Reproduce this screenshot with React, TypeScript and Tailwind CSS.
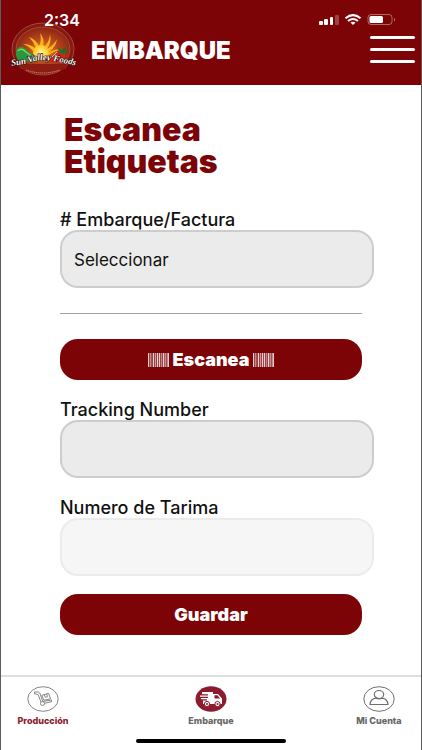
import React from "react";

function Logo() {
  return (
    <svg viewBox="0 0 68 56" className="h-14 w-[68px] shrink-0" role="img" aria-label="Sun Valley Foods">
      <defs>
        <radialGradient id="sky" cx="50%" cy="55%" r="55%">
          <stop offset="0" stopColor="#e08a25" />
          <stop offset="0.5" stopColor="#b8481b" />
          <stop offset="1" stopColor="#8d2414" />
        </radialGradient>
        <radialGradient id="sun">
          <stop offset="0" stopColor="#fff59a" />
          <stop offset="1" stopColor="#ffc51f" />
        </radialGradient>
        <path id="wave" d="M1 45 Q12 44 22 41 T44 40 Q56 42 68 45" />
      </defs>
      <ellipse cx="34" cy="28" rx="31" ry="26" fill="#87170f" stroke="#a86a58" strokeWidth="0.7" />
      <ellipse cx="34" cy="28" rx="27" ry="22" fill="url(#sky)" stroke="#c0704f" strokeWidth="0.5" />
      <g fill="#f9b41c">
        <path d="M30 26Q33 18 31 12Q36 18 34 26Z" />
        <path d="M35 26Q41 20 41 13Q43 21 38 28Z" />
        <path d="M38 28Q45 24 48 18Q47 26 40 31Z" />
        <path d="M27 27Q24 20 20 16Q28 19 31 27Z" />
        <path d="M24 30Q20 25 14 23Q22 23 27 28Z" />
        <path d="M40 31Q46 28 53 28Q46 30 40 34Z" />
      </g>
      <circle cx="32" cy="32" r="8" fill="url(#sun)" />
      <path d="M7 29Q11 23 17 28Q22 34 31 36L28 41L10 40Q6 36 7 29Z" fill="#2c963f" />
      <path d="M9 30Q12 26 17 31Q23 36 28 37" fill="none" stroke="#83d45b" strokeWidth="1.3" />
      <path d="M33 40Q41 38 46 33Q51 28 56 32Q56 39 50 42Z" fill="#c92a15" />
      <path d="M38 38Q45 36 48 31" fill="none" stroke="#ffd9a0" strokeWidth="0.9" />
      <path d="M50 31L49 27L53 29L57 25L56 29L59 31L54 33Z" fill="#1e6e2c" />
      <path d="M10 47Q34 58 58 47L54 43H12Z" fill="#8d1d12" />
      <path d="M17 49Q34 55 51 49" fill="none" stroke="#cf8b74" strokeWidth="1" strokeDasharray="1.4 0.6" />
      <text
        className="font-['Liberation_Serif',serif] text-[9px] font-bold italic"
        fill="#fff"
        stroke="#2b0705"
        strokeWidth="1.2"
        strokeLinejoin="round"
        paintOrder="stroke"
      >
        <textPath href="#wave" startOffset="50%" textAnchor="middle">Sun Valley Foods</textPath>
      </text>
    </svg>
  );
}

function StatusIcons() {
  return (
    <svg viewBox="0 0 78 14" className="h-3.5 w-[78px]" fill="#fff" aria-hidden="true">
      <rect x="0" y="8" width="4" height="4" rx="1" />
      <rect x="5" y="6" width="4" height="6" rx="1" />
      <rect x="11" y="4" width="3" height="8" rx="1" />
      <rect x="16" y="2" width="4" height="10" rx="1" opacity="0.25" />
      <g fill="none" stroke="#fff" strokeWidth="2">
        <path d="M26.500 5.2Q34 -1 41.500 5.2" />
        <path d="M29 8Q34 4 39 8" />
      </g>
      <path d="M31.500 9.6Q34 7.9 36.500 9.6L34 12Z" />
      <rect x="49" y="1.5" width="24" height="10" rx="3" fill="none" stroke="#fff" strokeOpacity="0.4" />
      <rect x="50.500" y="3" width="13.500" height="7" rx="1.500" />
      <path d="M75 5Q77 6.500 75 8.500Z" opacity="0.5" />
    </svg>
  );
}

function Barcode() {
  return (
    <svg viewBox="0 0 21 14" className="h-3.5 w-[21px]" fill="#fff" aria-hidden="true">
      <rect width="21" height="14" opacity="0.25" />
      <path opacity="0.75" d="M0 0h1v14h-1zM2.500 0h.6v14h-.6zM5 0h1v14h-1zM7 0h.6v14h-.6zM9 0h1v14h-1zM11 0h1v14h-1zM13 0h.5v14h-.5zM15 0h1.200v14h-1.200zM17.500 0h.6v14h-.6zM19.500 0h1.500v14h-1.500z" />
    </svg>
  );
}

function HandTruckIcon() {
  return (
    <svg viewBox="0 0 32 26" className="h-[26px] w-8" fill="none" stroke="#858585" aria-hidden="true">
      <ellipse cx="16" cy="13" rx="15.200" ry="12.300" />
      <g strokeWidth="1" strokeLinejoin="round">
        <path d="M7.500 6H11.500L12.800 7L15.800 15.500L24.500 14V15.700L17.500 17.300" />
        <path d="M7.500 6V7.800L11 8.500L14 16" />
        <path d="M14.800 9.300L21.500 7.300L23.500 12.800L17 14.300Z" />
        <path d="M17.300 8.800L18.300 11.300L20.500 10.700L19.700 8" />
        <circle cx="15.500" cy="17.500" r="2" />
      </g>
    </svg>
  );
}

function TruckIcon() {
  return (
    <svg viewBox="0 0 32 26" className="h-[26px] w-8" aria-hidden="true">
      <ellipse cx="16" cy="13" rx="15.500" ry="12.700" fill="#8b1b2d" />
      <path d="M7 6H18V8H23L27 12.500V18H8V14.500H12V13.300H6V12H13V10.800H5V9.500H13V8.200H7Z" fill="#fff" />
      <path d="M19.500 9.300H22.500L25 12.500H19.500Z" fill="#8b1b2d" />
      <circle cx="12" cy="18" r="2.600" fill="#fff" stroke="#8b1b2d" />
      <circle cx="22.500" cy="18" r="2.600" fill="#fff" stroke="#8b1b2d" />
      <circle cx="12" cy="18" r="1" fill="#8b1b2d" />
      <circle cx="22.500" cy="18" r="1" fill="#8b1b2d" />
    </svg>
  );
}

function UserIcon() {
  return (
    <svg viewBox="0 0 32 26" className="h-[26px] w-8" fill="none" stroke="#6e6e6e" aria-hidden="true">
      <ellipse cx="16" cy="13" rx="15.200" ry="12.300" />
      <ellipse cx="16" cy="8.500" rx="4.700" ry="4" strokeWidth="1.200" />
      <path d="M7 18.500Q7.500 12.800 13 12.200Q16 13.500 19 12.200Q24.500 12.800 25 18.500Z" strokeWidth="1.200" />
    </svg>
  );
}

const label = "block text-[18px] leading-5 font-medium";
const field = "-mr-3 h-[58px] w-[calc(100%+12px)] appearance-none rounded-[18px] border-2 px-3 text-[17px]";
const action = "flex h-[41px] w-full items-center justify-center gap-1 rounded-[18px] bg-[#7c0306] text-[18px] leading-6 font-black text-white";
const tab = "flex w-[84px] flex-col items-center gap-[3px] text-[9px] leading-3 font-extrabold";

export default function App() {
  return (
    <div className="flex min-h-screen flex-col border-x border-[#5c5c5c] bg-white font-['Inter','Liberation_Sans',sans-serif] text-[#111]">
      <header className="relative flex h-[85px] items-center bg-[#7c0306] pt-[13px] pr-1.5 pl-2 text-white">
        <Logo />
        <span className="ml-3.5 pt-1 text-[24px] leading-8 font-black">EMBARQUE</span>
        <button type="button" aria-label="Menú" className="ml-auto flex w-[45px] flex-col gap-[9px]">
          <span className="h-[3px] rounded-full bg-white" />
          <span className="h-[3px] rounded-full bg-white" />
          <span className="h-[3px] rounded-full bg-white" />
        </button>
        <div className="absolute inset-x-0 top-0 flex h-10 items-center justify-between pr-6 pl-[43px]">
          <span className="text-[16px] font-semibold">2:34</span>
          <StatusIcons />
        </div>
      </header>

      <main className="flex-1 px-[59px] pt-7">
        <h1 className="ml-1 pt-px text-[32px] leading-8 font-black text-[#7c0306]">
          Escanea
          <br />
          Etiquetas
        </h1>
        <form onSubmit={(e) => e.preventDefault()}>
          <label htmlFor="factura" className={`${label} mt-8`}># Embarque/Factura</label>
          <select id="factura" className={`${field} border-[#cdcdcd] bg-[#ebebeb] pt-1`}>
            <option>Seleccionar</option>
          </select>
          <hr className="my-[25px] border-[#a3a3a3]" />
          <button type="button" className={action}>
            <Barcode />
            Escanea
            <Barcode />
          </button>
          <label htmlFor="tracking" className={`${label} mt-5`}>Tracking Number</label>
          <input id="tracking" type="text" className={`${field} border-[#cdcdcd] bg-[#ebebeb]`} />
          <label htmlFor="tarima" className={`${label} mt-5`}>Numero de Tarima</label>
          <input id="tarima" type="text" className={`${field} border-[#ebebeb] bg-[#f6f6f6]`} />
          <button type="submit" className={`${action} mt-[18px]`}>Guardar</button>
        </form>
      </main>

      <footer className="border-t-2 border-[#dedede] pt-[9px]">
        <nav className="flex justify-between">
          <a href="#produccion" className={`${tab} text-[#8b1b2d]`}>
            <HandTruckIcon />
            Producción
          </a>
          <a href="#embarque" className={`${tab} text-[#666]`}>
            <TruckIcon />
            Embarque
          </a>
          <a href="#cuenta" className={`${tab} text-[#666]`}>
            <UserIcon />
            Mi Cuenta
          </a>
        </nav>
        <div className="mx-auto mt-3 mb-[7px] h-1 w-[150px] rounded-full bg-black" />
      </footer>
    </div>
  );
}
